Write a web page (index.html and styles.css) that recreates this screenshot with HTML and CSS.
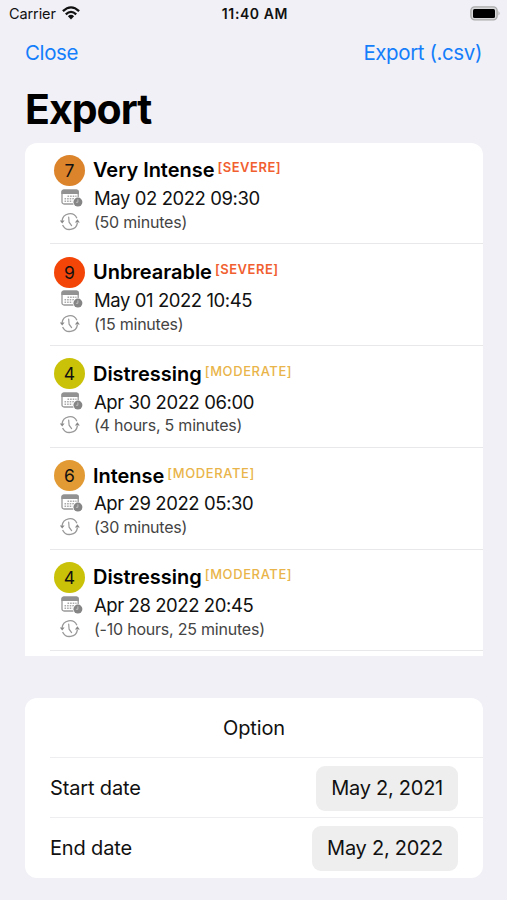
FILE: index.html
```html
<!DOCTYPE html>
<html lang="en">
<head>
<meta charset="utf-8">
<title>Export</title>
<link rel="stylesheet" href="styles.css">
</head>
<body>
<svg class="defs" width="0" height="0" aria-hidden="true">
  <symbol id="calendar" viewBox="0 0 22 19">
    <rect x="1" y="1.2" width="16.2" height="13.8" rx="2" fill="#fff" stroke="#999" stroke-width="1.3"/>
    <path d="M.4 4.9V2.7Q.4.6 2.6.6h13Q17.8.6 17.8 2.7v2.2z" fill="#929292"/>
    <path d="M6.5 7.2h9M3.5 9.7h12M3.5 12.2h8" stroke="#aaa" stroke-width="1.4" stroke-dasharray="1.6 1"/>
    <circle cx="16.9" cy="13.1" r="5.2" fill="#fff"/>
    <circle cx="16.9" cy="13.1" r="4.5" fill="#858585"/>
    <path d="M16.9 10.3v3h-2" fill="none" stroke="#ccc" stroke-width=".8"/>
  </symbol>
  <symbol id="history" viewBox="0 0 20 20">
    <path d="M2.1 8.8A7.8 7.8 0 0 1 16.9 6.2M17.4 10.8A7.8 7.8 0 0 1 2.6 12.9" fill="none" stroke="#999" stroke-width="1.3"/>
    <path d="M-.2 8.4h4.8L2.2 11.6zM14.9 10.4h4.9L17.4 7.2z" fill="#888"/>
    <path d="M8.7 5.2l.4 5 2.5 3.4" fill="none" stroke="#999" stroke-width="1.2" stroke-linecap="round"/>
  </symbol>
</svg>
<header class="status">
  <div class="carrier"><span>Carrier</span>
    <svg width="18" height="14" viewBox="0 0 18 14" fill="none" stroke="#111" stroke-width="2.3">
      <path d="M.9 5.2Q9-2.5 17.1 5.2M3.8 8.3Q9 3.4 14.2 8.3"/>
      <path d="M5.9 10.2Q9 7.5 12.1 10.2L9 13.5z" fill="#111" stroke="none"/>
    </svg>
  </div>
  <div class="clock">11:40 AM</div>
  <svg class="battery" width="31" height="15" viewBox="0 0 31 15">
    <rect x=".9" y=".9" width="26.2" height="13" rx="3.8" fill="#d8d8da" stroke="#aaa" stroke-width="1.4"/>
    <rect x="3" y="3" width="22" height="8.9" rx="1.5" fill="#000"/>
    <path d="M28.5 5q2.2 2.3 0 4.6z" fill="#aaa"/>
  </svg>
</header>
<nav class="nav"><a class="close">Close</a><a class="csv">Export (.csv)</a></nav>
<h1>Export</h1>
<main>
  <section class="card entries">
    <article class="entry">
      <div class="headline"><span class="score s7">7</span><h2>Very Intense</h2><span class="tag severe">[SEVERE]</span></div>
      <div class="date"><svg><use href="#calendar"/></svg><span>May 02 2022 09:30</span></div>
      <div class="duration"><svg><use href="#history"/></svg><span>(50 minutes)</span></div>
    </article>
    <article class="entry">
      <div class="headline"><span class="score s9">9</span><h2>Unbrearable</h2><span class="tag severe">[SEVERE]</span></div>
      <div class="date"><svg><use href="#calendar"/></svg><span>May 01 2022 10:45</span></div>
      <div class="duration"><svg><use href="#history"/></svg><span>(15 minutes)</span></div>
    </article>
    <article class="entry">
      <div class="headline"><span class="score s4">4</span><h2>Distressing</h2><span class="tag moderate">[MODERATE]</span></div>
      <div class="date"><svg><use href="#calendar"/></svg><span>Apr 30 2022 06:00</span></div>
      <div class="duration"><svg><use href="#history"/></svg><span>(4 hours, 5 minutes)</span></div>
    </article>
    <article class="entry">
      <div class="headline"><span class="score s6">6</span><h2>Intense</h2><span class="tag moderate">[MODERATE]</span></div>
      <div class="date"><svg><use href="#calendar"/></svg><span>Apr 29 2022 05:30</span></div>
      <div class="duration"><svg><use href="#history"/></svg><span>(30 minutes)</span></div>
    </article>
    <article class="entry">
      <div class="headline"><span class="score s4">4</span><h2>Distressing</h2><span class="tag moderate">[MODERATE]</span></div>
      <div class="date"><svg><use href="#calendar"/></svg><span>Apr 28 2022 20:45</span></div>
      <div class="duration"><svg><use href="#history"/></svg><span>(-10 hours, 25 minutes)</span></div>
    </article>
  </section>
  <section class="card options">
    <div class="option title">Option</div>
    <div class="option"><span>Start date</span><span class="pill">May 2, 2021</span></div>
    <div class="option"><span>End date</span><span class="pill">May 2, 2022</span></div>
  </section>
</main>
</body>
</html>
```
FILE: styles.css
```css
* { box-sizing: border-box; }
body { margin: 0; width: 507px; height: 900px; overflow: hidden; background: #f1f0f6; color: #111; font-family: Inter, "Liberation Sans", sans-serif; white-space: nowrap; }
.defs { display: block; }
.status { display: grid; grid-template-columns: 1fr auto 1fr; align-items: center; height: 28px; padding: 0 6px 1px 9px; font-size: 14.5px; letter-spacing: -.1px; }
.carrier { display: flex; align-items: center; gap: 6px; }
.carrier svg { margin-top: -1px; }
.clock { font-weight: 600; font-size: 14px; letter-spacing: .6px; }
.battery { justify-self: end; margin-top: -1px; }
.nav { display: flex; justify-content: space-between; height: 48px; padding: 0 25px; line-height: 50px; font-size: 20.5px; color: #147efb; letter-spacing: -.4px; }
h1 { margin: 0; padding-left: 25px; height: 66.5px; font-size: 41px; line-height: 66px; letter-spacing: -1px; color: #000; }
.card { width: 458px; margin-left: 25px; background: #fff; border-radius: 12px; overflow: hidden; }
.entries { height: 513.5px; border-radius: 12px 12px 0 0; }
.entry { height: 101.8px; margin-left: 25px; padding: 12.5px 0 0 4px; border-bottom: 1px solid #e8e8ea; }
.entry { padding-top: 12.8px; }
.headline { display: flex; align-items: center; height: 30px; }
.score { width: 31px; height: 31px; border-radius: 50%; text-align: center; font-size: 17.5px; line-height: 31px; }
.s7 { background: #dc842b; }
.s9 { background: #f34507; }
.s4 { background: #c9c208; }
.s6 { background: #e29a34; }
h2 { margin: 0 3px 0 8px; font-size: 20px; line-height: 30px; font-weight: 600; letter-spacing: -.03px; color: #000; }
.tag { height: 24px; line-height: 19px; font-size: 13px; font-weight: 500; letter-spacing: .6px; }
.severe { color: #f15f31; font-weight: 600; letter-spacing: .5px; }
.moderate { color: #e9b449; }
.date, .duration { display: flex; align-items: center; }
.date { height: 25.5px; font-size: 18.5px; letter-spacing: -.42px; }
.date svg { width: 22px; height: 19px; margin: 0 11px 0 7px; }
.duration { height: 22px; font-size: 16px; letter-spacing: -.22px; color: #444; }
.duration svg { width: 20px; height: 20px; margin: 0 14px 0 6px; overflow: visible; }
.options { height: 180px; margin-top: 42px; padding-left: 25px; }
.option { display: flex; justify-content: space-between; align-items: center; height: 60px; padding-right: 25px; font-size: 20px; letter-spacing: -.15px; border-bottom: 1.4px solid #eeeef0; }
.option:nth-child(2) { padding-top: 1px; }
.option:last-child { border: 0; }
.title { justify-content: center; padding-top: 1px; }
.pill { padding: 0 15px; border-radius: 9px; background: #eee; line-height: 45px; letter-spacing: -.25px; }
```
